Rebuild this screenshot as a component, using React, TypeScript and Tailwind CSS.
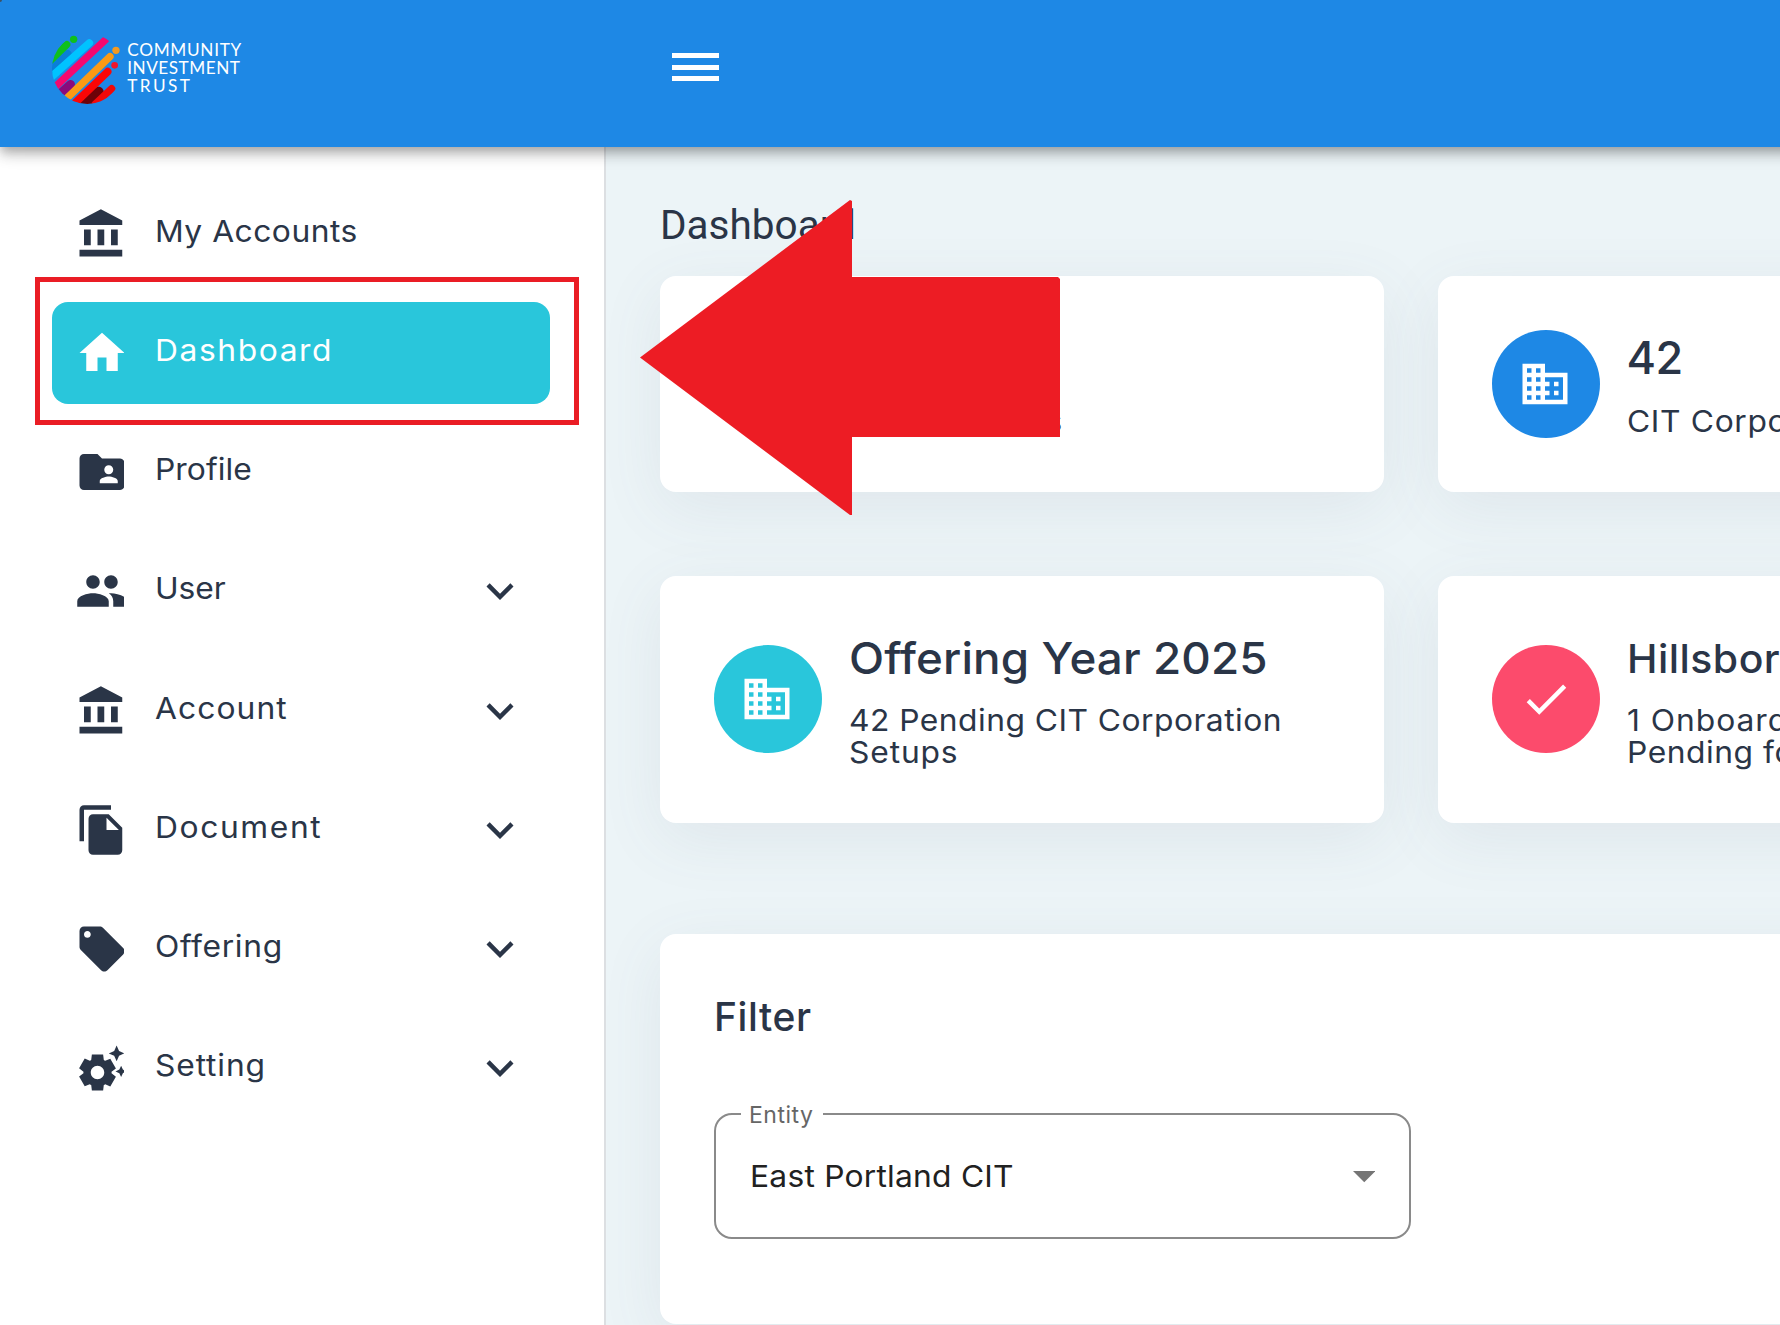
import React from "react";
import type { ReactNode } from "react";
import {
  MdBusiness,
  MdCheck,
  MdExpandMore,
  MdFileCopy,
  MdFolderShared,
  MdLocalOffer,
  MdPeople,
  MdSettingsSuggest,
} from "react-icons/md";

function BankIcon() {
  return (
    <svg viewBox="0 0 24 24" className="size-[54px] shrink-0" fill="currentColor">
      <path d="M4 10v7h3v-7H4zm6 0v7h3v-7h-3zM2 22h19v-3H2v3zm14-12v7h3v-7h-3zm-4.5-9L2 6v2h19V6l-9.5-5z" />
    </svg>
  );
}

function HomeIcon() {
  return (
    <svg viewBox="0 0 24 24" className="size-[54px] shrink-0" fill="currentColor">
      <path d="M10 20v-6h4v6h5v-8h3L12 3 2 12h3v8z" />
    </svg>
  );
}

function Logo() {
  return (
    <div className="flex items-start">
      <svg viewBox="150 100 220 220" className="size-[73.3px] shrink-0" fill="none" strokeLinecap="round">
        <defs>
          <clipPath id="disc">
            <circle cx="262" cy="207" r="106" />
          </clipPath>
        </defs>
        <g clipPath="url(#disc)">
          <path d="M150 210L203 163" stroke="#0a7fd8" strokeWidth="24" />
          <path d="M140 193L200 135" stroke="#0fc01c" strokeWidth="22" />
          <path d="M145 240L268 130" stroke="#00c3ff" strokeWidth="23" />
          <path d="M180 282L212 254" stroke="#8a0a7c" strokeWidth="26" />
          <path d="M160 267L317 120" stroke="#f5086f" strokeWidth="22" />
          <path d="M250 315L296 276" stroke="#6d0208" strokeWidth="30" />
          <path d="M190 306L330 171" stroke="#fb9a15" strokeWidth="22" />
          <path d="M215 320L323 216" stroke="#fb0606" strokeWidth="23" />
          <path d="M285 314L335 267" stroke="#f20808" strokeWidth="22" />
        </g>
        <circle cx="221" cy="119" r="11" fill="#0fc01c" />
        <circle cx="348" cy="152" r="11" fill="#f39a20" />
        <circle cx="344" cy="197" r="10" fill="#f0142c" />
      </svg>
      <div className="mt-[7.5px] ml-[4px] flex flex-col font-['Lato',sans-serif] text-[17.2px] leading-[18px] text-white">
        <span className="self-start tracking-[0.7px] whitespace-nowrap">COMMUNITY</span>
        <span className="self-start tracking-[0.5px] whitespace-nowrap">INVESTMENT</span>
        <span className="self-start tracking-[2.4px] whitespace-nowrap">TRUST</span>
      </div>
    </div>
  );
}

interface NavItem {
  label: string;
  icon: ReactNode;
  tracking: string;
  active?: boolean;
  expandable?: boolean;
}

const navItems: NavItem[] = [
  { label: "My Accounts", icon: <BankIcon />, tracking: "tracking-[0.45px]" },
  { label: "Dashboard", icon: <HomeIcon />, tracking: "tracking-[1.48px]", active: true },
  { label: "Profile", icon: <MdFolderShared className="size-[54px] shrink-0" />, tracking: "tracking-[0.05px]" },
  { label: "User", icon: <MdPeople className="size-[54px] shrink-0" />, tracking: "tracking-[-0.1px]", expandable: true },
  { label: "Account", icon: <BankIcon />, tracking: "tracking-[1px]", expandable: true },
  { label: "Document", icon: <MdFileCopy className="size-[54px] shrink-0" />, tracking: "tracking-[1.5px]", expandable: true },
  { label: "Offering", icon: <MdLocalOffer className="size-[54px] shrink-0" />, tracking: "tracking-[0.6px]", expandable: true },
  { label: "Setting", icon: <MdSettingsSuggest className="size-[54px] shrink-0" />, tracking: "tracking-[0.8px]", expandable: true },
];

function Sidebar() {
  return (
    <aside className="w-[606px] shrink-0 border-r-2 border-[#dcdfe2] bg-white pt-[35.75px] pl-[52px]">
      <nav className="flex w-[498px] flex-col gap-[17.5px]">
        {navItems.map((item) => (
          <div
            key={item.label}
            className={
              item.active
                ? "relative flex h-[101.75px] items-center rounded-[16px] bg-[#29c6db] pr-[23.5px] pl-[22.5px] text-white"
                : "flex h-[101.75px] items-center pr-[23.5px] pl-[22.5px] text-[#2a3547]"
            }
          >
            <div className="w-[49.5px] shrink-0 overflow-hidden">{item.icon}</div>
            <span
              className={`ml-[31px] origin-left scale-x-[1.06] pb-[6px] text-[30px] leading-[36px] whitespace-nowrap ${item.tracking}`}
            >
              {item.label}
            </span>
            {item.expandable && <MdExpandMore className="ml-auto size-[54px]" />}
            {item.active && (
              <div className="absolute -top-[25px] -left-[17px] h-[148px] w-[544px] border-[5px] border-[#ea1d25]" />
            )}
          </div>
        ))}
      </nav>
    </aside>
  );
}

interface StatCardProps {
  circle: string;
  icon: ReactNode;
  title: ReactNode;
  lines: ReactNode;
  height: string;
}

function StatCard({ circle, icon, title, lines, height }: StatCardProps) {
  return (
    <section
      className={`flex w-[724px] shrink-0 items-center rounded-[16px] bg-white px-[54px] shadow-[0_16px_64px_rgba(90,100,123,0.09)] ${height}`}
    >
      <div className={`flex size-[108px] shrink-0 items-center justify-center rounded-full text-white ${circle}`}>
        {icon}
      </div>
      <div className="ml-[26.5px] flex flex-col items-start text-[#2a3547]">
        {title}
        <div className="mt-[21px] flex flex-col items-start text-[30px] leading-[31.5px] whitespace-nowrap">{lines}</div>
      </div>
    </section>
  );
}

function FilterCard() {
  return (
    <section className="h-[390px] w-[1502px] rounded-[16px] bg-white px-[54px] pt-[59px] shadow-[0_16px_64px_rgba(90,100,123,0.09)]">
      <h2 className="text-[39px] leading-[48px] font-medium tracking-[0.6px] text-[#2a3547]">Filter</h2>
      <div className="relative mt-[72px] flex h-[126px] w-[697px] items-center justify-between rounded-[18px] border-2 border-[#8a8a8a] pr-[34px] pl-[33.5px]">
        <div className="absolute -top-[16px] left-[25px] flex h-[32px] w-[82px] items-center bg-white pl-[8px] text-[23px] leading-[32px] tracking-[0.5px] text-[#666]">
          Entity
        </div>
        <span className="origin-left scale-x-[1.06] text-[30px] leading-[36px] tracking-[0.2px] whitespace-nowrap text-[#212121]">
          East Portland CIT
        </span>
        <svg viewBox="0 0 10 5" className="mt-[2px] h-[11.25px] w-[22.5px]" fill="#757575">
          <path d="M0 0l5 5 5-5z" />
        </svg>
      </div>
    </section>
  );
}

function Arrow() {
  return (
    <svg viewBox="0 0 420 316" className="absolute top-[200px] left-[640px] h-[316px] w-[420px]" fill="#ed1c24">
      <path d="M0 157.5L210 0L212 1V77H418L420 79V237H212V315H210Z" />
    </svg>
  );
}

export default function App() {
  return (
    <div className="relative flex h-[1325px] w-[1780px] flex-col overflow-hidden bg-[#ecf4f7] font-['Inter',sans-serif]">
      <header className="relative z-10 flex h-[147px] w-[1840px] shrink-0 bg-[#1e88e5] shadow-[0_4.5px_9px_-2px_rgba(0,0,0,0.2),0_9px_11px_0_rgba(0,0,0,0.14),0_2px_22px_0_rgba(0,0,0,0.12)]">
        <div className="absolute top-0 left-0 size-[2px] rounded-br-[2px] bg-[#3d5266]" />
        <div className="w-[672px] shrink-0 pt-[33px] pl-[50px]">
          <Logo />
        </div>
        <div className="mt-[53px] flex h-[28px] w-[47px] flex-col justify-between">
          <div className="h-[5px] bg-white" />
          <div className="h-[5px] bg-white" />
          <div className="h-[5px] bg-white" />
        </div>
      </header>
      <div className="flex min-h-0 flex-1">
        <Sidebar />
        <main className="w-[1556px] shrink-0 pt-[54px] pl-[54px]">
          <h1 className="font-['Roboto',sans-serif] text-[40.5px] leading-[48px] text-[#2a3547]">Dashboard</h1>
          <div className="mt-[27px] flex gap-[54px]">
            <StatCard
              height="h-[216px]"
              circle="bg-[#29c6db]"
              icon={<MdBusiness className="mr-[2px] size-[54px]" />}
              title={<div className="h-[54px]" />}
              lines={<span className="w-[213.5px] text-right">s</span>}
            />
            <StatCard
              height="h-[216px]"
              circle="bg-[#1e88e5]"
              icon={<MdBusiness className="mr-[2px] size-[54px]" />}
              title={<h3 className="text-[45px] leading-[54px] font-medium tracking-[-0.5px]">42</h3>}
              lines={<span className="origin-left scale-x-[1.06] tracking-[0.6px]">CIT Corporations</span>}
            />
          </div>
          <div className="mt-[84px] flex gap-[54px]">
            <StatCard
              height="h-[247px] pb-px"
              circle="bg-[#29c6db]"
              icon={<MdBusiness className="mr-[2px] size-[54px]" />}
              title={
                <h3 className="h-[54px] origin-left scale-x-[1.04] text-[44px] leading-[56px] font-medium tracking-[0.1px] whitespace-nowrap">
                  Offering Year 2025
                </h3>
              }
              lines={
                <>
                  <span className="origin-left scale-x-[1.06] tracking-[0.43px]">42 Pending CIT Corporation</span>
                  <span className="origin-left scale-x-[1.06] tracking-[0.8px]">Setups</span>
                </>
              }
            />
            <StatCard
              height="h-[247px] pb-px"
              circle="bg-[#fc4b6c]"
              icon={<MdCheck className="size-[54px]" />}
              title={
                <h3 className="h-[54px] origin-left scale-x-[1.05] text-[39px] leading-[58px] font-medium tracking-[0.45px] whitespace-nowrap">
                  Hillsboro
                </h3>
              }
              lines={
                <>
                  <span className="origin-left scale-x-[1.06] tracking-[0.9px]">1 Onboarding</span>
                  <span className="origin-left scale-x-[1.06] tracking-[0.5px]">Pending for</span>
                </>
              }
            />
          </div>
          <div className="mt-[111px]">
            <FilterCard />
          </div>
        </main>
      </div>
      <div className="absolute z-20">
        <Arrow />
      </div>
    </div>
  );
}
